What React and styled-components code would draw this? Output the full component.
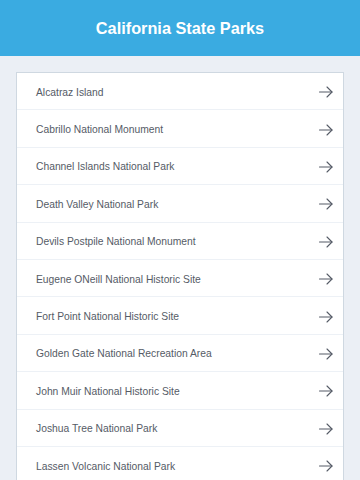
import React from 'react'
import styled, { createGlobalStyle } from 'styled-components';

const Global = createGlobalStyle`
  body {
    margin: 0;
    background: #ebeff5;
    font-family: "Liberation Sans", Arial, sans-serif;
  }
`;

const Header = styled.header`
  height: 56px;
  background: #3aabe1;
  display: flex;
  align-items: center;
  justify-content: center;
  color: #fff;
  font-size: 16.3px;
  font-weight: 700;
`;

const Main = styled.main`
  padding: 16px 16px 0 16px;
  width: 328px;
`;

const Card = styled.ul`
  list-style: none;
  margin: 0;
  padding: 0;
  background: #fff;
  border: 1px solid #cfd8e1;
`;

const Row = styled.li`
  height: 37.4px;
  box-sizing: border-box;
  padding: 2px 10px 0 19px;
  display: flex;
  align-items: center;
  justify-content: space-between;
  border-bottom: 1px solid #edf1f6;
  color: #555b66;
  font-size: 10.3px;
`;

const Arrow = () => (
  <svg width="14" height="12" viewBox="0 0 14 12" fill="none" stroke="#555b66" strokeWidth="1.1" strokeLinecap="round" strokeLinejoin="round">
    <path d="M0.5 6H13" />
    <path d="M8 1L13 6L8 11" />
  </svg>
);

export default function App() {
  const parks = [
    'Alcatraz Island',
    'Cabrillo National Monument',
    'Channel Islands National Park',
    'Death Valley National Park',
    'Devils Postpile National Monument',
    'Eugene ONeill National Historic Site',
    'Fort Point National Historic Site',
    'Golden Gate National Recreation Area',
    'John Muir National Historic Site',
    'Joshua Tree National Park',
    'Lassen Volcanic National Park',
  ];

  return (
    <>
      <Global />
      <Header>California State Parks</Header>
      <Main>
        <Card>
          {parks.map((p, i) => (
            <Row key={i}>
              <span>{p}</span>
              <Arrow />
            </Row>
          ))}
        </Card>
      </Main>
    </>
  )
}
